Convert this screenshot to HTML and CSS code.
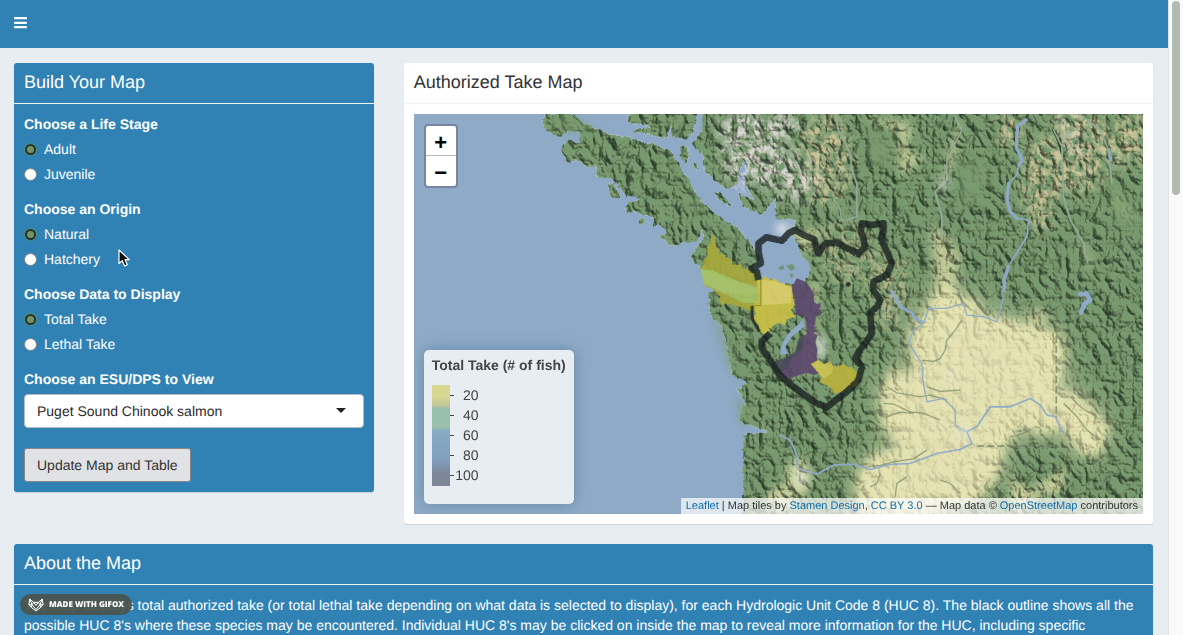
FILE: index.html
```html
<!DOCTYPE html>
<html lang="en">
<head>
<meta charset="utf-8">
<meta name="viewport" content="width=device-width, initial-scale=1">
<title>Authorized Take Map</title>
<link rel="stylesheet" href="styles.css">
</head>
<body>
<header class="navbar">
  <button class="nav-toggle" type="button" aria-label="Toggle navigation">
    <svg width="13" height="12" viewBox="0 0 13 12" aria-hidden="true"><path d="M1 1.2h11M1 5.8h11M1 10.2h11" stroke="#fff" stroke-width="2.2" stroke-linecap="round"/></svg>
  </button>
</header>

<main class="content">
  <section class="box box-blue box-form">
    <h3 class="box-title">Build Your Map</h3>
    <form class="box-body">
      <fieldset class="group">
        <legend class="group-label">Choose a Life Stage</legend>
        <label class="option"><input class="radio" type="radio" name="stage" checked>Adult</label>
        <label class="option"><input class="radio" type="radio" name="stage">Juvenile</label>
      </fieldset>
      <fieldset class="group">
        <legend class="group-label">Choose an Origin</legend>
        <label class="option"><input class="radio" type="radio" name="origin" checked>Natural</label>
        <label class="option"><input class="radio" type="radio" name="origin">Hatchery</label>
      </fieldset>
      <fieldset class="group">
        <legend class="group-label">Choose Data to Display</legend>
        <label class="option"><input class="radio" type="radio" name="data" checked>Total Take</label>
        <label class="option"><input class="radio" type="radio" name="data">Lethal Take</label>
      </fieldset>
      <div class="group group-last">
        <label class="group-label" for="esu">Choose an ESU/DPS to View</label>
        <div class="select-wrap">
          <select class="select" id="esu"><option>Puget Sound Chinook salmon</option></select>
        </div>
      </div>
      <button class="btn" type="button">Update Map and Table</button>
    </form>
  </section>

  <section class="box box-white box-map">
    <h3 class="box-title">Authorized Take Map</h3>
    <div class="box-body">
      <div class="map">
        <svg class="map-canvas" viewBox="414 114 729 400" preserveAspectRatio="xMidYMid slice" aria-hidden="true">
          <defs>
            <filter id="relief" filterUnits="userSpaceOnUse" x="404" y="104" width="749" height="420" color-interpolation-filters="sRGB">
              <feTurbulence type="fractalNoise" baseFrequency=".16" numOctaves="2" seed="4" result="jit"/>
              <feDisplacementMap in="SourceGraphic" in2="jit" scale="5" xChannelSelector="R" yChannelSelector="G" result="land"/>
              <feTurbulence type="turbulence" baseFrequency=".075 .06" numOctaves="4" seed="11" result="noise"/>
              <feDiffuseLighting in="noise" surfaceScale="6" diffuseConstant="1.25" lighting-color="#fffef0" result="lit">
                <feDistantLight azimuth="315" elevation="54"/>
              </feDiffuseLighting>
              <feComponentTransfer in="lit" result="shade">
                <feFuncR type="linear" slope=".66" intercept=".38"/>
                <feFuncG type="linear" slope=".58" intercept=".42"/>
                <feFuncB type="linear" slope=".62" intercept=".4"/>
              </feComponentTransfer>
              <feBlend in="land" in2="shade" mode="multiply" result="mix"/>
              <feComposite in="mix" in2="land" operator="in"/>
            </filter>
            <filter id="ragged" x="-10%" y="-10%" width="120%" height="120%">
              <feTurbulence type="fractalNoise" baseFrequency=".25" numOctaves="2" seed="7"/>
              <feDisplacementMap in="SourceGraphic" scale="6" xChannelSelector="R" yChannelSelector="G"/>
            </filter>
            <filter id="soft3" x="-30%" y="-30%" width="160%" height="160%"><feGaussianBlur stdDeviation="4"/></filter>
            <filter id="soft5" x="-30%" y="-30%" width="160%" height="160%"><feGaussianBlur stdDeviation="14"/></filter>
            <filter id="peaks" filterUnits="userSpaceOnUse" x="404" y="104" width="749" height="420" color-interpolation-filters="sRGB">
              <feGaussianBlur in="SourceGraphic" stdDeviation="7" result="blob"/>
              <feTurbulence type="fractalNoise" baseFrequency=".13" numOctaves="4" seed="3"/>
              <feColorMatrix values="0 0 0 0 1  0 0 0 0 1  0 0 0 0 1  3 0 0 0 -1" result="speck"/>
              <feComposite in="blob" in2="speck" operator="in"/>
            </filter>
            <path id="basin" transform="translate(780 280) scale(.3333)" d="M500 10 530 50 590 60 600 100 720 130 840 160 850 230 835 330 900 350 985 440 960 520 900 520 850 440 790 460 720 440 670 500 650 590 590 660 400 720 240 710 230 600 270 530 370 500 310 440 300 360 330 270 400 290 395 190 390 150 440 90 470 30Z"/>
            <clipPath id="frame"><rect x="414" y="114" width="729" height="400"/></clipPath>
          </defs>
          <rect x="0" y="0" width="1600" height="800" fill="#8faac7"/>
          <g clip-path="url(#frame)">
          <g filter="url(#relief)">
            <g fill="#779a70">
              <path d="M542 122 547 114 570 113 582 123 607 133 633 139 653 145 670 150 677 160 690 183 700 200 720 217 737 227 750 243 760 257 754 267 760 285 740 284 716 276 700 267 690 258 704 237 703 229 697 242 683 242 673 247 658 237 667 233 660 225 652 225 653 217 633 212 625 213 627 203 640 198 627 197 618 187 613 178 597 178 595 165 588 168 577 160 567 163 561 147 567 140 580 143 580 132 570 130 560 138 548 132Z"/>
              <path d="M607 185 614 183 621 198 612 198Z"/><circle cx="642" cy="221" r="3"/>
              <path d="M681 146 687 147 690 155 686 164 679 156ZM694 162l4 2-2 7-2-3ZM712 190 722 195 732 206 720 202Z"/>
              <path d="M627 122 632 104H697V114L693 133 687 139 673 137 670 126 667 139 650 135 630 132 650 126ZM702 104V130L692 143 703 157 705 173 717 183 728 190 738 183 743 160 749 165 745 183 754 200 737 193 743 207 762 215 768 207 776 198 775 218 797 222 790 229 796 243 801 257 809 262 809 273 802 283 792 284 784 283 763 277 762 293 708 292 710 315 722 328 728 350 732 375 748 382 736 389 745 402 738 421 752 426 768 432 754 433 743 435 743 530H1160V104Z"/>
            </g>
            <g filter="url(#soft3)" fill="#e3e3ae">
              <use href="#basin"/>
              <path d="M860 118 905 122 912 130 906 150 925 158 900 176 898 130ZM953 135 962 120 952 165 940 185ZM930 225 945 235 960 255 956 290 936 290Z" opacity=".65"/>
              <path d="M790 228 812 232 850 222 815 238 806 255 796 240ZM812 270 818 285 816 330 808 380 803 360 812 320Z" opacity=".7"/>
              <path d="M1076 228 1092 262 1088 270ZM1110 190 1125 205 1138 222 1120 212ZM1012 476 1030 490 1068 466 1058 495 1040 492 1025 514 1010 510Z" opacity=".75"/>
              <ellipse cx="798" cy="478" rx="12" ry="20" opacity=".75"/><ellipse cx="780" cy="500" rx="12" ry="14" opacity=".75"/><ellipse cx="1037" cy="318" rx="10" ry="9" opacity=".6"/>
            </g>
            <g fill="#c9c69a" filter="url(#peaks)">
              <ellipse cx="825" cy="160" rx="26" ry="46"/><ellipse cx="1040" cy="185" rx="18" ry="48"/><ellipse cx="1080" cy="150" rx="34" ry="45"/><ellipse cx="1130" cy="140" rx="16" ry="30"/><ellipse cx="1010" cy="130" rx="12" ry="18"/><ellipse cx="850" cy="255" rx="30" ry="30" opacity=".6"/><ellipse cx="890" cy="290" rx="18" ry="40" opacity=".7"/>
            </g>
            <g fill="#d9d9d3" filter="url(#peaks)">
              <ellipse cx="753" cy="148" rx="34" ry="40"/><ellipse cx="793" cy="178" rx="22" ry="24"/><ellipse cx="760" cy="125" rx="44" ry="14"/><ellipse cx="1064" cy="118" rx="12" ry="7"/><ellipse cx="1073" cy="142" rx="14" ry="8"/>
            </g>
          </g>
          <use href="#basin" fill="#e5e3b4" opacity=".8" filter="url(#soft5)"/>
          <g fill="#7c9c70" filter="url(#soft3)" opacity=".7">
            <path d="M660 148 686 190 706 215 728 232 740 250 715 230 690 205ZM736 395 752 410 750 425 741 422ZM708 300 730 370 780 400 745 378ZM1065 195 1085 240 1100 270 1088 265ZM1095 150 1120 190 1143 215 1143 245 1115 215Z"/>
            <path d="M548 118 575 118 600 134 560 130ZM868 130 895 140 890 165 868 160ZM955 160 990 165 980 200 958 210ZM825 290 830 340 820 360Z"/>
          </g>
          <g fill="none" stroke="#7b8c68" stroke-width="1" opacity=".75" transform="translate(780 280) scale(.3333)">
            <path stroke-width="4" d="M425 240 460 244 480 235 495 210 500 180 525 150 545 120M320 320 350 338 420 350 450 345 500 360M310 370 340 372 390 395 430 400 480 420M320 410 360 396 400 400M440 320 480 334 540 330M260 560 300 556 340 545 400 536 440 510M690 470 710 466 740 455M850 370 890 410 920 450 960 480M870 350 900 380 930 400M270 620 290 610 300 580M345 650 350 610 380 590M480 600 510 610 540 640"/>
          </g>
          <g fill="none" stroke="#6c8062" stroke-width="1.6" stroke-dasharray="7 3" opacity=".75">
            <path d="M797 244H1143M1056 246V417M977 446H1057"/>
          </g>
          <g fill="none" stroke="#8faac7" stroke-linecap="round" stroke-linejoin="round">
            <g transform="translate(780 280) scale(.3333)" stroke-width="5">
              <path d="M0 465 30 480 48 520 52 565 110 582 160 555 220 552 270 568 330 553 390 550 470 520 540 508 575 490 560 455 590 440 610 410 630 380 690 380 750 355 780 375 800 405 825 410 850 460"/>
              <path stroke-width="4" d="M555 455 525 435 525 390 490 355 440 365 428 300 425 250 385 190 400 150 430 130 445 85 500 85 550 70 560 105 610 110 650 125 668 60 670 0"/>
              <path stroke-width="9" d="M335 35 360 80 395 98 405 115 425 125"/>
              <path stroke-width="14" d="M900 42 920 42 930 60 912 72 902 98"/>
            </g>
            <g transform="translate(780 50) scale(.3333)" stroke-width="5">
              <path stroke-width="10" d="M738 210 712 228 708 290 725 330 717 345M685 400 680 450 690 485 710 505M684 650 672 690 672 720M985 300 992 330"/>
              <path d="M715 347 710 375 685 400M710 505 745 510 740 560 690 640"/>
              <g stroke="#93ab9a"><path d="M165 193 175 240 210 310 215 360 230 400 230 500 200 510M160 450 178 470 185 510M820 240 845 290 850 440 870 510 910 580 922 640M900 193 960 240 985 300 995 400M520 193 545 240 500 330 500 390 465 425 485 500 485 560"/></g>
            </g>
          </g>
          <path d="M762 240 770 236 797 240 801 257 809 264 808 276 800 286 764 278Z" fill="#8faac7" filter="url(#ragged)"/>
          <path d="M778 268l5-3 1 4-4 1ZM786 266l6-2 3 4-4 3ZM789 273l5 2-3 3Z" fill="#6f9475"/>
          <g fill="#e9ece8" filter="url(#soft3)"><circle cx="782" cy="229" r="6"/><ellipse cx="820" cy="347" rx="4" ry="13"/><ellipse cx="801" cy="478" rx="7" ry="8" opacity=".6"/><circle cx="951" cy="378" r="5" opacity=".5"/><circle cx="963" cy="432" r="6" opacity=".6"/><circle cx="944" cy="184" r="6" opacity=".5"/></g>

          <g transform="translate(690 200) scale(.3333)">
            <g filter="url(#ragged)" opacity=".92">
              <path fill="#a8a93b" d="M70 102 76 115 76 135 88 152 84 162 95 160 110 172 122 178 128 192 145 196 150 186 158 205 172 206 185 218 192 210 210 225 212 245 208 320 185 335 168 328 150 320 105 310 98 318 85 300 90 290 65 265 45 258 38 245 42 225 30 205 42 195 38 180 52 168 50 140 62 128 64 105Z"/>
              <path fill="#a8c463" d="M32 208 70 212 150 245 208 265 208 310 160 308 100 280 65 262 40 250Z"/>
              <path fill="#c9c144" d="M200 238 215 240 225 226 240 240 255 236 270 248 305 258 308 290 315 315 302 330 315 350 290 358 284 375 262 368 245 380 235 395 222 402 205 392 206 376 190 360 196 340 190 318 202 300Z"/>
              <path fill="#ded06b" d="M216 240 250 242 303 262 304 310 216 314Z"/>
              <path fill="#5d4a6e" d="M320 235 345 245 370 275 372 305 380 312 392 308 390 325 395 340 378 350 375 370 372 400 382 405 376 425 382 450 378 470 385 490 378 500 385 520 370 525 350 518 310 530 290 540 265 520 280 480 320 460 325 425 350 400 345 350 318 345 312 300 305 262Z"/>
              <path fill="#b9b23d" d="M362 492 385 480 400 492 420 484 430 500 445 498 460 492 475 502 485 500 508 525 500 560 480 562 460 576 430 580 424 565 410 555 388 545 394 528 382 515Z"/>
              <path fill="#cfc553" d="M362 492 385 480 400 492 420 486 430 500 425 520 400 535 384 518Z"/>
            </g>
            <path fill="none" stroke="#8e8d2f" stroke-width="3" d="M212 240 212 316 185 318"/>
            <path d="M340 355 325 372 290 405 270 445 272 465 295 460 285 440 305 410 342 380Z" fill="#8faac7"/>
            <path d="M335 400 340 440 300 480 290 505 260 520 240 490 290 470 315 455 322 425Z" fill="#484a58" opacity=".85"/>
            <circle cx="474" cy="253" r="7" fill="#2b332b"/>
            <path filter="url(#ragged)" fill="none" stroke="#1d211f" stroke-opacity=".8" stroke-width="20" stroke-linejoin="round" d="M205 240 200 215 185 205 212 190 205 155 205 130 228 112 275 122 295 100 315 90 340 105 372 118 378 145 385 160 405 130 440 128 470 145 505 162 525 140 518 110 512 95 515 70 545 75 580 70 580 95 572 115 585 145 595 165 605 190 590 225 550 245 548 270 570 300 560 320 540 340 545 400 525 430 505 455 495 475 515 500 505 540 470 575 430 605 410 622 370 605 330 575 290 545 265 520 240 480 215 445 215 425 240 400"/>
            <path fill="none" stroke="#1d211f" stroke-opacity=".8" stroke-width="9" d="M208 395 185 355 186 318"/>
          </g>
          </g>
        </svg>

        <div class="zoom">
          <button class="zoom-btn" type="button" aria-label="Zoom in">+</button>
          <button class="zoom-btn" type="button" aria-label="Zoom out">−</button>
        </div>

        <div class="legend">
          <strong class="legend-title">Total Take (# of fish)</strong>
          <div class="legend-scale">
            <div class="legend-bar"></div>
            <ul class="legend-ticks">
              <li class="tick">20</li>
              <li class="tick">40</li>
              <li class="tick">60</li>
              <li class="tick">80</li>
              <li class="tick">100</li>
            </ul>
          </div>
        </div>

        <p class="attribution"><a href="#leaflet">Leaflet</a> | Map tiles by <a href="#stamen">Stamen Design</a>, <a href="#cc">CC BY 3.0</a> — Map data © <a href="#osm">OpenStreetMap</a> contributors</p>
      </div>
    </div>
  </section>

  <section class="box box-blue box-about">
    <h3 class="box-title">About the Map</h3>
    <div class="box-body">
      <p class="about-text">The map displays total authorized take (or total lethal take depending on what data is selected to display), for each Hydrologic Unit Code 8 (HUC 8). The black outline shows all the possible HUC 8's where these species may be encountered. Individual HUC 8's may be clicked on inside the map to reveal more information for the HUC, including specific</p>
    </div>
  </section>
</main>

<div class="scroll-track" aria-hidden="true"><div class="scroll-thumb"></div></div>

<div class="badge">
  <svg class="badge-icon" viewBox="0 0 48 42" aria-hidden="true"><path fill="none" stroke="#fff" stroke-width="3" stroke-linejoin="round" d="M5 3 17 13H31L43 3 45 20 38 28 24 39 10 28 3 20ZM5 3 12 20 24 35 36 20 43 3M3 20 12 20 17 13M45 20 36 20 31 13M12 20 10 28M36 20 38 28M17 13 24 22 31 13"/></svg>
  <span>MADE WITH GIFOX</span>
</div>

<svg class="cursor" width="13" height="19" viewBox="0 0 13 19" aria-hidden="true"><path d="M1 1V14.5L4.2 11.6 6.6 17 9.3 15.8 7 10.6H11.3Z" fill="#111" stroke="#fff" stroke-width="1.2" stroke-linejoin="round"/></svg>
</body>
</html>
```
FILE: styles.css
```css
* {
  box-sizing: border-box;
}

html {
  scrollbar-width: none;
}

body {
  margin: 0;
  padding-right: 15px;
  background: #e8edf2;
  color: #333;
  font-family: "Liberation Sans", Arial, sans-serif;
  font-size: 14px;
  line-height: 20px;
  text-rendering: geometricPrecision;
}

.navbar {
  display: flex;
  align-items: center;
  height: 48px;
  padding: 0 14px;
  background: #3182b4;
}

.nav-toggle {
  display: flex;
  padding: 0 0 3px;
  border: 0;
  background: none;
}

.content {
  display: grid;
  grid-template-columns: repeat(12, minmax(0, 1fr));
  gap: 20px 30px;
  align-items: start;
  padding: 15px 15px 20px 14px;
}

.box {
  border-radius: 3px;
  box-shadow: 0 1px 1px rgba(0, 0, 0, .12);
}

.box-form {
  grid-column: span 4;
}

.box-map {
  grid-column: span 8;
}

.box-about {
  grid-column: span 12;
}

.box-blue {
  background: #3182b4;
  color: #fff;
}

.box-white {
  background: #fff;
}

.box-title {
  margin: 0;
  padding: 9px 10px 11px;
  border-bottom: 1px solid #f1f3f4;
  font-size: 18px;
  font-weight: 400;
  line-height: 20px;
}

.box-body {
  padding: 10px;
}

.group {
  display: flex;
  flex-direction: column;
  gap: 5px;
  min-width: 0;
  margin: 0 0 15px;
  padding: 0;
  border: 0;
}

.group-last {
  margin-bottom: 20px;
}

.group-label {
  display: block;
  padding: 0;
  font-weight: 700;
}

legend.group-label {
  margin-bottom: 5px;
}

.option {
  display: flex;
  align-items: center;
  gap: 7px;
}

.radio {
  appearance: none;
  width: 13px;
  height: 13px;
  margin: 0;
  border: 1px solid #7d8388;
  border-radius: 50%;
  background: #fff;
}

.radio:checked {
  width: 11px;
  height: 11px;
  margin: 1px;
  border: 2px solid #26332c;
  background: #729468;
  box-shadow: 0 0 0 1px #4f8f72;
}

.select-wrap {
  position: relative;
}

.select-wrap::after {
  content: "";
  position: absolute;
  top: 14px;
  right: 18px;
  border: 5px solid transparent;
  border-top-color: #222;
  border-bottom: 0;
  pointer-events: none;
}

.select {
  appearance: none;
  display: block;
  width: 100%;
  height: 34px;
  padding: 0 12px;
  border: 1px solid #b9bdc0;
  border-radius: 4px;
  background: #fff;
  color: #2b2b2b;
  font: inherit;
  text-rendering: inherit;
}

.btn {
  display: block;
  height: 34px;
  padding: 0 12px;
  border: 1px solid #8c8684;
  border-radius: 3px;
  background: #e0e2e5;
  color: #333;
  font: inherit;
  text-rendering: inherit;
}

.map {
  position: relative;
  height: 400px;
  overflow: hidden;
  background: #8faac7;
}

.map-canvas {
  display: block;
  width: 100%;
  height: 100%;
}

.zoom {
  position: absolute;
  top: 10px;
  left: 10px;
  width: 34px;
  border: 2px solid #7884a0;
  border-radius: 4px;
  background: #fff;
}

.zoom-btn {
  display: block;
  width: 30px;
  height: 30px;
  padding: 4px 0 0;
  border: 0;
  background: none;
  color: #000;
  font: 700 22px/26px "Liberation Sans", Arial, sans-serif;
}

.zoom-btn:first-child {
  border-bottom: 1px solid #bbb;
}

.legend {
  position: absolute;
  bottom: 10px;
  left: 10px;
  width: 150px;
  height: 154px;
  padding: 5px 8px;
  border-radius: 5px;
  background: #e8edf2;
  box-shadow: 0 0 15px rgba(60, 110, 140, .55);
  color: #444;
  white-space: nowrap;
}

.legend-title {
  display: block;
}

.legend-scale {
  display: flex;
  padding-top: 10px;
}

.legend-bar {
  width: 18px;
  height: 101px;
  background: linear-gradient(#d8d892 0, #d6d691 12%, #bfc29a 21%, #98c0ac 23%, #98c0ac 42%, #87acc4 45%, #809fbd 75%, #7d8599 88%, #7d8599 100%);
}

.legend-ticks {
  margin: 0;
  padding: 0;
  list-style: none;
}

.tick {
  display: flex;
  align-items: center;
  justify-content: space-between;
  width: 29px;
}

.tick::before {
  content: "";
  width: 4px;
  height: 1px;
  background: #444;
}

.attribution {
  position: absolute;
  right: 0;
  bottom: 0;
  margin: 0;
  padding: 0 5px;
  background: rgba(255, 255, 255, .7);
  font-size: 11px;
  line-height: 16px;
  white-space: nowrap;
}

.attribution a {
  color: #0f6fae;
  text-decoration: none;
}

.about-text {
  margin: 0;
}

.scroll-track {
  position: fixed;
  top: 0;
  right: 0;
  bottom: 0;
  width: 15px;
  padding: 1px 3px;
  border-left: 1px solid #e3e3e6;
  background: #fafafa;
}

.scroll-thumb {
  width: 8px;
  height: 194px;
  border-radius: 4px;
  background: #b3bbb1;
}

.badge {
  position: fixed;
  bottom: 20px;
  left: 20px;
  display: flex;
  align-items: center;
  gap: 5px;
  height: 21px;
  padding: 0 8px;
  border-radius: 11px;
  background: rgba(74, 84, 76, .93);
  color: #fff;
  font: 800 8px/12px "Open Sans", sans-serif;
  white-space: nowrap;
}

.badge-icon {
  width: 16px;
  height: 14px;
}

.cursor {
  position: fixed;
  top: 249px;
  left: 118px;
}
```
